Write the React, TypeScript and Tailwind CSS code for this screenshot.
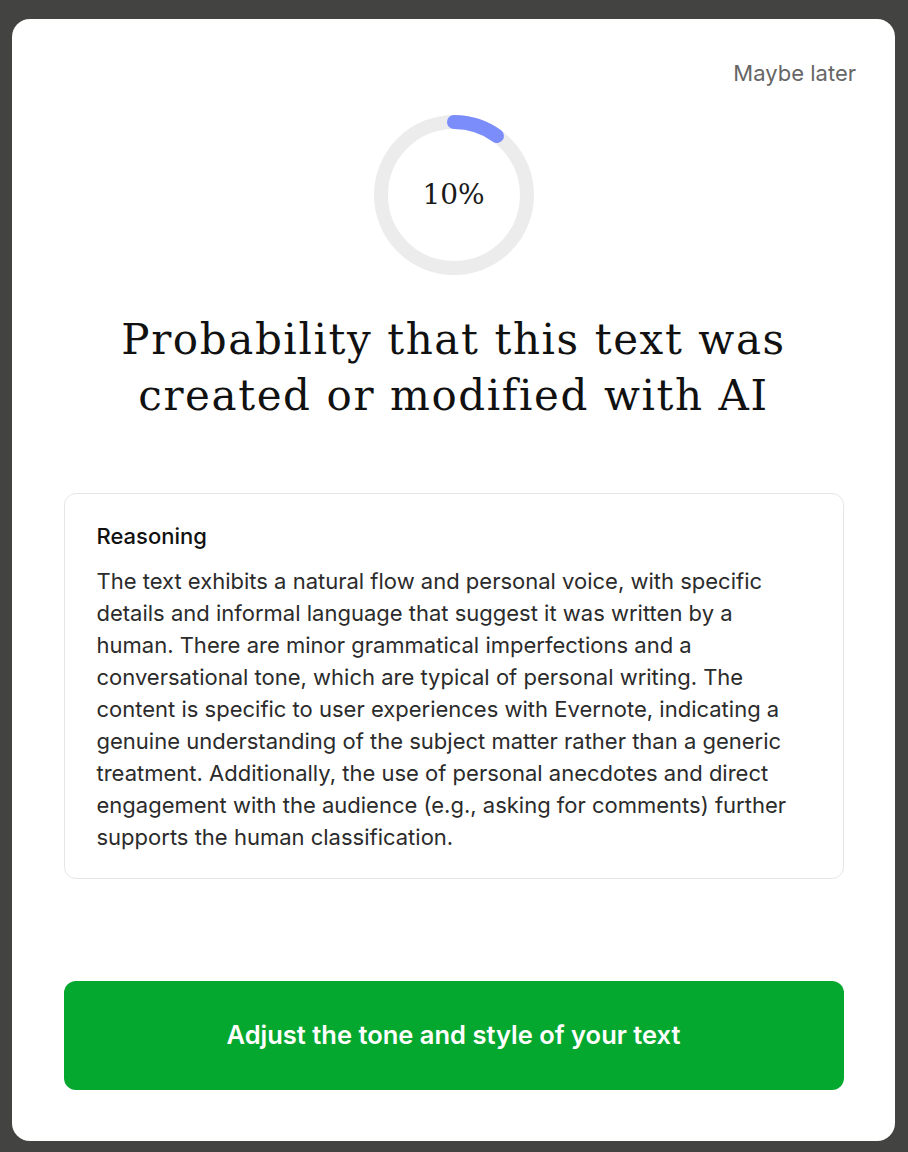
import React from "react";

function Ring() {
  const r = 73;
  const c = 2 * Math.PI * r;
  const pct = 0.1;
  return (
    <div className="relative w-[160px] h-[160px]">
      <svg width="160" height="160" viewBox="0 0 160 160" className="absolute inset-0">
        <circle cx="80" cy="80" r={r} fill="none" stroke="#ececec" strokeWidth="14" />
        <circle
          cx="80"
          cy="80"
          r={r}
          fill="none"
          stroke="#7b8cfb"
          strokeWidth="14"
          strokeLinecap="round"
          strokeDasharray={`${c * pct} ${c}`}
          transform="rotate(-90 80 80)"
        />
      </svg>
      <div className="absolute inset-0 flex items-center justify-center">
        <span className="text-[28px] text-[#1a1a1a] font-['DejaVu_Serif',serif]">10%</span>
      </div>
    </div>
  );
}

export default function App() {
  return (
    <div className="w-[908px] h-[1152px] bg-[#434342] pt-[19px] pl-[12px] font-['Inter',sans-serif]">
      <div className="w-[883px] h-[1122px] bg-white rounded-[18px] flex flex-col items-center px-[51px] pt-[40px]">
        <div className="self-end -mr-[12px] text-[22px] leading-7 text-[#666666]">Maybe later</div>
        <div className="mt-[28px]">
          <Ring />
        </div>
        <h1 className="mt-[37px] text-center text-[42px] leading-[56px] tracking-[1.6px] text-[#111111] font-['DejaVu_Serif',serif]">
          Probability that this text was
          <br />
          created or modified with AI
        </h1>
        <div className="mt-[69px] w-[780px] h-[386px] border border-[#e6e6e6] rounded-[12px] px-[32px] pt-[26px]">
          <div className="text-[22px] leading-8 font-medium text-[#111111]">Reasoning</div>
          <p className="mt-[13px] text-[22px] leading-8 text-[#2b2b2b]">
            The text exhibits a natural flow and personal voice, with specific details and informal language that suggest it was written by a human. There are minor grammatical imperfections and a conversational tone, which are typical of personal writing. The content is specific to user experiences with Evernote, indicating a genuine understanding of the subject matter rather than a generic treatment. Additionally, the use of personal anecdotes and direct engagement with the audience (e.g., asking for comments) further supports the human classification.
          </p>
        </div>
        <button className="mt-[102px] w-[780px] h-[109px] bg-[#05a82f] rounded-[12px] text-white text-[25.5px] font-semibold">
          Adjust the tone and style of your text
        </button>
      </div>
    </div>
  );
}
